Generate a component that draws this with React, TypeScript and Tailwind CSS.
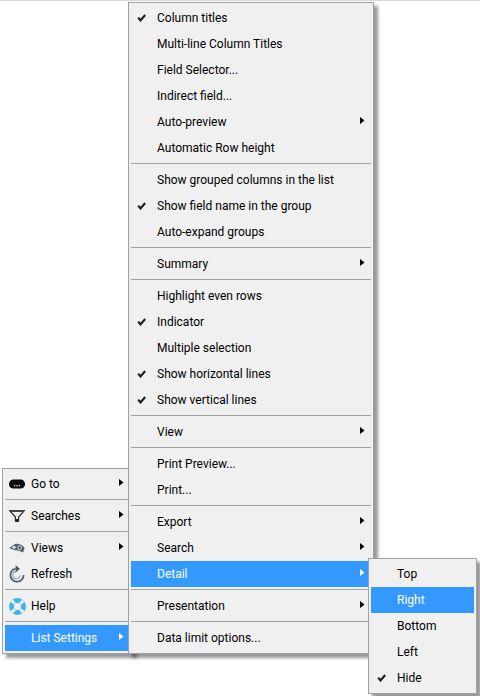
import React from "react";

type Item = { label?: string; checked?: boolean; sub?: boolean; active?: boolean; icon?: React.ReactNode; sep?: boolean };

const Check = () => (
  <svg width="12" height="8" viewBox="0 0 12 8" className="ml-[-1px]">
    <path d="M4.2 3.6 L6.5 6.4 L11.2 1" fill="none" stroke="#1c1c1c" strokeWidth="2.2" />
  </svg>
);

const Arrow = ({ light }: { light?: boolean }) => (
  <svg width="5" height="7" viewBox="0 0 5 7" className="mr-[6px] mt-[-3px]">
    <path d="M0 0 L4.5 3.5 L0 7 Z" fill={light ? "#ffffff" : "#000000"} />
  </svg>
);

const GoTo = () => (
  <svg width="16" height="16" viewBox="0 0 16 16">
    <rect x="0" y="3.4" width="16" height="9.2" rx="4.4" fill="#0c0c0c" />
    <rect x="5" y="9" width="1.3" height="1.3" fill="#ddd" />
    <rect x="7.4" y="9" width="1.3" height="1.3" fill="#ddd" />
    <rect x="9.8" y="9" width="1.3" height="1.3" fill="#ddd" />
  </svg>
);
const Funnel = () => (
  <svg width="16" height="16" viewBox="0 0 16 16">
    <path d="M0.5 2.5 H15.5 L9.6 9 V13 H6.4 V9 Z" fill="none" stroke="#2a2a2a" strokeWidth="1.2" />
    <path d="M0.8 2 H15.2 L13.5 4 H2.6 Z" fill="#444" />
    <path d="M6.4 11 H9.6 V14 H6.4 Z" fill="#222" />
  </svg>
);
const Eye = () => (
  <svg width="16" height="16" viewBox="0 0 16 16">
    <path d="M0.2 8 L6 4 C9 3.4 13 4.5 15.8 8 C15 9 14.8 10.5 14.2 12.5 L9 10.6 C6 10.5 3 9.5 0.2 8 Z" fill="#566070" />
    <ellipse cx="5" cy="7.4" rx="1.7" ry="1.4" fill="#e0e3e6" />
    <circle cx="10.6" cy="7.8" r="2.2" fill="#e0e3e6" />
    <circle cx="10.6" cy="7.8" r="1.2" fill="#333b47" />
  </svg>
);
const Refresh = () => (
  <svg width="16" height="18" viewBox="0 0 16 18">
    <path d="M6.6 3.6 A6.6 6.6 0 1 0 14.6 10" fill="none" stroke="#566070" strokeWidth="1.8" />
    <path d="M7.4 6.6 A3.6 3.6 0 1 0 11 10.3" fill="none" stroke="#9aa2ac" strokeWidth="1.1" />
    <path d="M6.6 0.2 L11 3.8 L6.6 7.4 Z" fill="#4e5866" />
  </svg>
);
const Help = () => (
  <svg width="17" height="17" viewBox="0 0 17 17">
    <circle cx="8.5" cy="8.5" r="6" fill="none" stroke="#45b3ea" strokeWidth="5" />
    <g stroke="#e6f5fc" strokeWidth="3">
      <path d="M2.6 2.6 L5.8 5.8" />
      <path d="M14.4 2.6 L11.2 5.8" />
      <path d="M2.6 14.4 L5.8 11.2" />
      <path d="M14.4 14.4 L11.2 11.2" />
    </g>
  </svg>
);

const mainItems: Item[] = [
  { label: "Column titles", checked: true },
  { label: "Multi-line Column Titles" },
  { label: "Field Selector..." },
  { label: "Indirect field..." },
  { label: "Auto-preview", sub: true },
  { label: "Automatic Row height" },
  { sep: true },
  { label: "Show grouped columns in the list" },
  { label: "Show field name in the group", checked: true },
  { label: "Auto-expand groups" },
  { sep: true },
  { label: "Summary", sub: true },
  { sep: true },
  { label: "Highlight even rows" },
  { label: "Indicator", checked: true },
  { label: "Multiple selection" },
  { label: "Show horizontal lines", checked: true },
  { label: "Show vertical lines", checked: true },
  { sep: true },
  { label: "View", sub: true },
  { sep: true },
  { label: "Print Preview..." },
  { label: "Print..." },
  { sep: true },
  { label: "Export", sub: true },
  { label: "Search", sub: true },
  { label: "Detail", sub: true, active: true },
  { sep: true },
  { label: "Presentation", sub: true },
  { sep: true },
  { label: "Data limit options..." },
];

const leftItems: Item[] = [
  { label: "Go to", sub: true, icon: <GoTo /> },
  { sep: true },
  { label: "Searches", sub: true, icon: <Funnel /> },
  { sep: true },
  { label: "Views", sub: true, icon: <Eye /> },
  { label: "Refresh", icon: <Refresh /> },
  { sep: true },
  { label: "Help", icon: <Help /> },
  { sep: true },
  { label: "List Settings", sub: true, active: true },
];

const subItems: Item[] = [
  { label: "Top" },
  { label: "Right", active: true },
  { label: "Bottom" },
  { label: "Left" },
  { label: "Hide", checked: true },
];

function Rows({ items }: { items: Item[] }) {
  return (
    <div className="flex flex-col">
      {items.map((it, i) =>
        it.sep ? (
          <div key={i} className="h-[6px] pt-[2px]">
            <div className="h-px w-full bg-[#a0a0a0]" />
          </div>
        ) : (
          <div
            key={i}
            className={
              it.active
                ? "h-[26px] flex items-center whitespace-nowrap bg-[#3399ff] text-white"
                : "h-[26px] flex items-center whitespace-nowrap text-black"
            }
          >
            <span className="w-[26px] pl-[4px] shrink-0 flex items-center">
              {it.checked && <Check />}
              {it.icon}
            </span>
            <span className="flex-1">{it.label}</span>
            {it.sub && <Arrow light={it.active} />}
          </div>
        )
      )}
    </div>
  );
}

const panel =
  "absolute border border-[#a0a0a0] bg-[#f0f0f0] p-[2px] shadow-[4px_4px_3px_rgba(0,0,0,0.4)]";

export default function App() {
  return (
    <div className="relative w-[480px] h-[696px] overflow-hidden bg-white font-['Roboto',sans-serif] text-[12px] leading-[16px]">
      <div className="h-px bg-[#d8d8e0]" />
      <div className={panel + " left-[2px] top-[468px] w-[131px] h-[186px]"}>
        <Rows items={leftItems} />
      </div>
      <div className={panel + " left-[128px] top-[2px] w-[246px] h-[652px]"}>
        <Rows items={mainItems} />
      </div>
      <div className={panel + " left-[368px] top-[558px] w-[109px] h-[136px]"}>
        <Rows items={subItems} />
      </div>
    </div>
  );
}
